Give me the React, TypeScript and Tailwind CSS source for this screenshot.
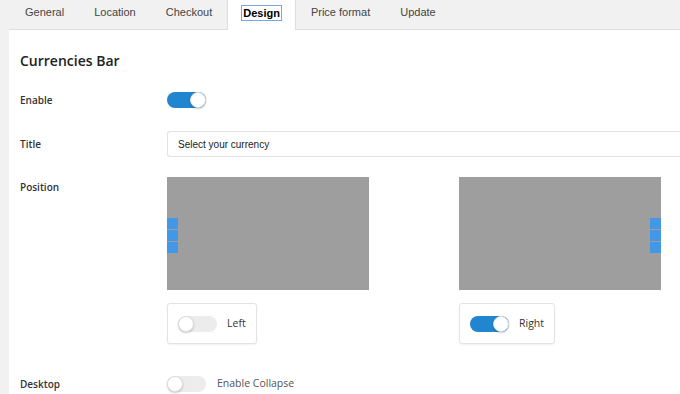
import React from 'react';

const tabs = ['General', 'Location', 'Checkout', 'Design', 'Price format', 'Update'];

function Toggle({ on }: { on: boolean }) {
  return (
    <div
      className={`relative h-[16px] w-[39px] rounded-full ${on ? 'bg-[#2185d0]' : 'bg-[#ececec]'}`}
    >
      <div
        className={`absolute top-0 h-[16px] w-[16px] rounded-full bg-white border border-[#dedede] shadow-[0_1px_2px_rgba(0,0,0,0.2)] ${on ? 'right-0' : 'left-0'}`}
      />
    </div>
  );
}

function Preview({ side }: { side: 'left' | 'right' }) {
  return (
    <div className={`flex h-[113px] w-[202px] flex-col justify-center bg-[#9e9e9e] pt-[4px] ${side === 'left' ? 'items-start' : 'items-end'}`}>
      <div className="flex flex-col gap-px">
        <div className="h-[11px] w-[11px] bg-[#4297e6]" />
        <div className="h-[11px] w-[11px] bg-[#4297e6]" />
        <div className="h-[11px] w-[11px] bg-[#4297e6]" />
      </div>
    </div>
  );
}

function PositionCard({ on, label }: { on: boolean; label: string }) {
  return (
    <div className="mt-[13px] inline-flex h-[41px] items-center gap-[10px] self-start rounded-[3px] border border-[#e3e3e3] bg-white pl-[10px] pr-[10px] shadow-[0_1px_2px_rgba(0,0,0,0.06)]">
      <Toggle on={on} />
      <span className="text-[10.5px] text-[#333]">{label}</span>
    </div>
  );
}

export default function App() {
  const ui = { fontFamily: '"Open Sans", "Noto Sans", sans-serif' };
  const arial = { fontFamily: '"Liberation Sans", Arial, sans-serif' };
  return (
    <div className="h-[394px] w-[680px] overflow-hidden bg-[#f1f1f1]">
      <div className="flex h-[29px] pl-[10px]" style={arial}>
        {tabs.map((t) => (
          <div
            key={t}
            className={`relative flex items-center pb-[5px] text-[11px] ${
              t === 'Design'
                ? 'z-10 h-[30px] border-x border-[#dddddd] bg-white px-[13px] font-bold text-black'
                : 'px-[15px] text-[#444]'
            }`}
          >
            {t === 'Design' ? (
              <span className="border border-[#7aa7e0] px-px leading-[14px]">{t}</span>
            ) : (
              t
            )}
          </div>
        ))}
      </div>
      <div className="ml-[9px] h-[365px] border-t border-[#dddddd] bg-white pl-[11px]" style={ui}>
        <h2 className="pt-[21px] text-[14px] font-semibold leading-[20px] text-[#222]">Currencies Bar</h2>

        <div className="mt-[21px] flex items-center">
          <div className="w-[147px] text-[10px] font-semibold text-[#333]">Enable</div>
          <Toggle on />
        </div>

        <div className="mt-[23px] flex items-center">
          <div className="w-[147px] text-[10px] font-semibold text-[#333]">Title</div>
          <div
            className="flex h-[26px] flex-1 items-center rounded-l-[3px] border border-r-0 border-[#e2e2e2] pl-[10px] text-[10px] text-[#222]"
            style={arial}
          >
            Select your currency
          </div>
        </div>

        <div className="mt-[20px] flex">
          <div className="w-[147px] pt-[3px] text-[10px] font-semibold text-[#333]">Position</div>
          <div className="flex gap-[90px]">
            <div className="flex flex-col">
              <Preview side="left" />
              <PositionCard on={false} label="Left" />
            </div>
            <div className="flex flex-col">
              <Preview side="right" />
              <PositionCard on label="Right" />
            </div>
          </div>
        </div>

        <div className="mt-[32px] flex items-center">
          <div className="w-[147px] text-[10px] font-semibold text-[#333]">Desktop</div>
          <div className="flex items-center gap-[11px]">
            <Toggle on={false} />
            <span className="text-[10.5px] text-[#555]">Enable Collapse</span>
          </div>
        </div>
      </div>
    </div>
  );
}
